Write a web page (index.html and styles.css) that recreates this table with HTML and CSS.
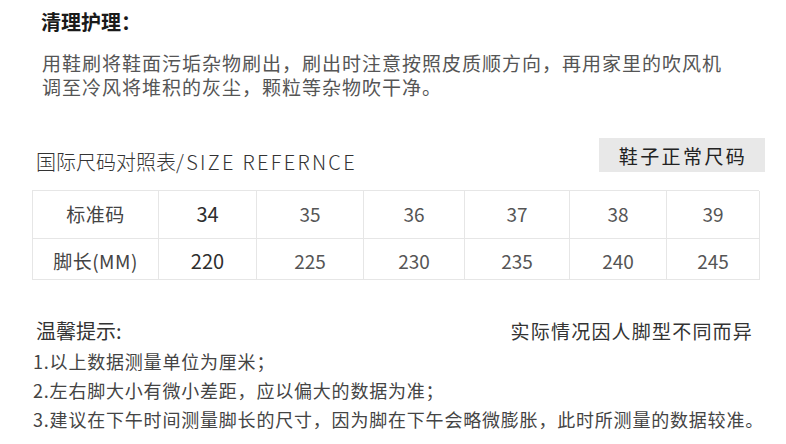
FILE: index.html
```html
<!DOCTYPE html>
<html lang="zh-CN">
<head>
<meta charset="utf-8">
<link rel="stylesheet" href="styles.css">
</head>
<body>
<div class="page">
  <section class="care">
    <h2 class="care-title">清理护理：</h2>
    <p class="care-text">用鞋刷将鞋面污垢杂物刷出，刷出时注意按照皮质顺方向，再用家里的吹风机<br>调至冷风将堆积的灰尘，颗粒等杂物吹干净。</p>
  </section>

  <section class="size-head">
    <div class="size-title">国际尺码对照表<span class="latin">/SIZE REFERNCE</span></div>
    <div class="badge">鞋子正常尺码</div>
  </section>

  <div class="size-table">
    <div class="cell label">标准码</div>
    <div class="cell strong">34</div>
    <div class="cell">35</div>
    <div class="cell">36</div>
    <div class="cell">37</div>
    <div class="cell">38</div>
    <div class="cell">39</div>
    <div class="cell label row2">脚长(MM)</div>
    <div class="cell strong row2">220</div>
    <div class="cell row2">225</div>
    <div class="cell row2">230</div>
    <div class="cell row2">235</div>
    <div class="cell row2">240</div>
    <div class="cell row2">245</div>
  </div>

  <section class="tips-head">
    <div class="tips-title">温馨提示:</div>
    <div class="tips-note">实际情况因人脚型不同而异</div>
  </section>
  <ol class="tips-list">
    <li>1.以上数据测量单位为厘米；</li>
    <li>2.左右脚大小有微小差距，应以偏大的数据为准；</li>
    <li>3.建议在下午时间测量脚长的尺寸，因为脚在下午会略微膨胀，此时所测量的数据较准。</li>
  </ol>
</div>
</body>
</html>
```

FILE: styles.css
```css
* { box-sizing: border-box; }
html, body {
  margin: 0;
  padding: 0;
  background: #ffffff;
}
body {
  width: 786px;
  height: 444px;
  overflow: hidden;
  font-family: "Noto Sans CJK SC", "Noto Sans", sans-serif;
}
.page {
  display: flex;
  flex-direction: column;
}

.care {
  padding: 10px 0 0 41px;
}
.care-title {
  margin: 0;
  font-size: 20px;
  line-height: 24px;
  font-weight: 700;
  color: #1a1a1a;
}
.care-text {
  margin: 17px 0 0 1px;
  font-size: 19px;
  line-height: 24px;
  letter-spacing: 1px;
  color: #555555;
}

.size-head {
  margin-top: 39px;
  padding: 0 21px 0 36px;
  display: flex;
  justify-content: space-between;
  align-items: flex-start;
}
.size-title {
  margin-top: 12px;
  font-size: 20px;
  line-height: 24px;
  font-weight: 300;
  letter-spacing: 0;
  color: #333333;
}
.size-title .latin {
  letter-spacing: 2.3px;
}
.badge {
  width: 166px;
  height: 34px;
  background: #e8e8e8;
  display: flex;
  align-items: center;
  justify-content: center;
  font-size: 19px;
  letter-spacing: 2.4px;
  color: #222222;
  padding-left: 2px;
}

.size-table {
  margin: 16px 0 0 32px;
  width: 727px;
  display: grid;
  grid-template-columns: 126px 98px 107px 101px 105px 97px 93px;
  grid-template-rows: 48px 41px;
  border-top: 1px solid #e6e6e6;
  border-left: 1px solid #e6e6e6;
}
.cell {
  border-right: 1px solid #e6e6e6;
  border-bottom: 1px solid #e6e6e6;
  display: flex;
  align-items: center;
  justify-content: center;
  font-size: 19px;
  color: #555555;
  padding-bottom: 2px;
}
.cell.row2 {
  padding-bottom: 0;
  padding-top: 2px;
}
.cell.label {
  color: #444444;
  letter-spacing: 0.5px;
}
.cell.strong {
  color: #2e2e2e;
  font-weight: 400;
  font-size: 20px;
}

.tips-head {
  margin-top: 37px;
  padding: 0 33px 0 36px;
  display: flex;
  justify-content: space-between;
  font-size: 19px;
  line-height: 28px;
  color: #333333;
}
.tips-title {
  font-size: 20px;
}
.tips-note {
  letter-spacing: 1.2px;
}
.tips-list {
  list-style: none;
  margin: 2px 0 0 0;
  padding: 0 0 0 33px;
  font-size: 18px;
  line-height: 29px;
  letter-spacing: 0.8px;
  color: #444444;
}
.tips-list li {
  margin: 0;
}
```
